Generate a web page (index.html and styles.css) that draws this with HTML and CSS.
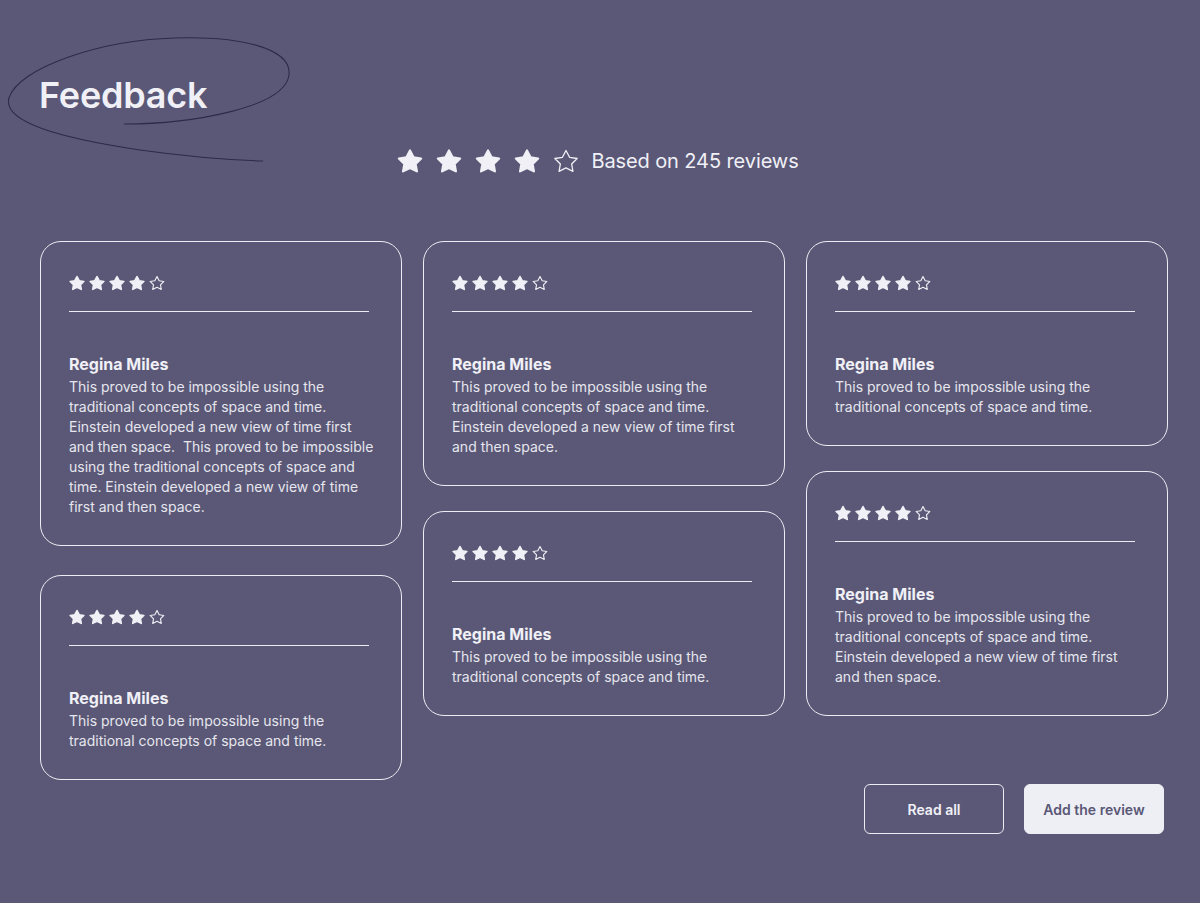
FILE: index.html
```html
<!DOCTYPE html>
<html lang="en">
<head>
<meta charset="utf-8">
<title>Feedback</title>
<link rel="stylesheet" href="styles.css">
</head>
<body>
<svg width="0" height="0" class="defs" aria-hidden="true">
  <defs>
    <path id="star" d="M12 2.3 L15.3 8.6 L22.3 9.7 L17.2 14.7 L18.4 21.6 L12 18.4 L5.6 21.6 L6.8 14.7 L1.7 9.7 L8.7 8.6 Z"/>
  </defs>
</svg>
<main class="page">
  <header class="header">
    <svg class="scribble" viewBox="0 0 300 140" width="300" height="140" aria-hidden="true">
      <path d="M124 94 C 190 94, 285 78, 289 45 C 292 18, 240 6, 175 8 C 100 10, 18 38, 9 68 C 2 92, 60 108, 140 120 C 190 127, 230 130, 263 131" fill="none" stroke="#2d2b47" stroke-width="1.1"/>
    </svg>
    <h1 class="title">Feedback</h1>
  </header>

  <div class="summary">
    <div class="stars stars--big">
      <svg class="star star--full" viewBox="0 0 24 24"><use href="#star"/></svg>
      <svg class="star star--full" viewBox="0 0 24 24"><use href="#star"/></svg>
      <svg class="star star--full" viewBox="0 0 24 24"><use href="#star"/></svg>
      <svg class="star star--full" viewBox="0 0 24 24"><use href="#star"/></svg>
      <svg class="star star--empty" viewBox="0 0 24 24"><use href="#star"/></svg>
    </div>
    <span class="summary__text">Based on 245 reviews</span>
  </div>

  <section class="grid">
    <div class="col col--wide-gap">
      <article class="card">
        <div class="stars">
          <svg class="star star--full" viewBox="0 0 24 24"><use href="#star"/></svg>
          <svg class="star star--full" viewBox="0 0 24 24"><use href="#star"/></svg>
          <svg class="star star--full" viewBox="0 0 24 24"><use href="#star"/></svg>
          <svg class="star star--full" viewBox="0 0 24 24"><use href="#star"/></svg>
          <svg class="star star--empty" viewBox="0 0 24 24"><use href="#star"/></svg>
        </div>
        <hr class="divider">
        <h3 class="name">Regina Miles</h3>
        <p class="text">This proved to be impossible using the traditional concepts of space and time. Einstein developed a new view of time first and then space.&nbsp; This proved to be impossible using the traditional concepts of space and time. Einstein developed a new view of time first and then space.</p>
      </article>
      <article class="card">
        <div class="stars">
          <svg class="star star--full" viewBox="0 0 24 24"><use href="#star"/></svg>
          <svg class="star star--full" viewBox="0 0 24 24"><use href="#star"/></svg>
          <svg class="star star--full" viewBox="0 0 24 24"><use href="#star"/></svg>
          <svg class="star star--full" viewBox="0 0 24 24"><use href="#star"/></svg>
          <svg class="star star--empty" viewBox="0 0 24 24"><use href="#star"/></svg>
        </div>
        <hr class="divider">
        <h3 class="name">Regina Miles</h3>
        <p class="text">This proved to be impossible using the traditional concepts of space and time.</p>
      </article>
    </div>
    <div class="col">
      <article class="card">
        <div class="stars">
          <svg class="star star--full" viewBox="0 0 24 24"><use href="#star"/></svg>
          <svg class="star star--full" viewBox="0 0 24 24"><use href="#star"/></svg>
          <svg class="star star--full" viewBox="0 0 24 24"><use href="#star"/></svg>
          <svg class="star star--full" viewBox="0 0 24 24"><use href="#star"/></svg>
          <svg class="star star--empty" viewBox="0 0 24 24"><use href="#star"/></svg>
        </div>
        <hr class="divider">
        <h3 class="name">Regina Miles</h3>
        <p class="text">This proved to be impossible using the traditional concepts of space and time. Einstein developed a new view of time first and then space.</p>
      </article>
      <article class="card">
        <div class="stars">
          <svg class="star star--full" viewBox="0 0 24 24"><use href="#star"/></svg>
          <svg class="star star--full" viewBox="0 0 24 24"><use href="#star"/></svg>
          <svg class="star star--full" viewBox="0 0 24 24"><use href="#star"/></svg>
          <svg class="star star--full" viewBox="0 0 24 24"><use href="#star"/></svg>
          <svg class="star star--empty" viewBox="0 0 24 24"><use href="#star"/></svg>
        </div>
        <hr class="divider">
        <h3 class="name">Regina Miles</h3>
        <p class="text">This proved to be impossible using the traditional concepts of space and time.</p>
      </article>
    </div>
    <div class="col">
      <article class="card">
        <div class="stars">
          <svg class="star star--full" viewBox="0 0 24 24"><use href="#star"/></svg>
          <svg class="star star--full" viewBox="0 0 24 24"><use href="#star"/></svg>
          <svg class="star star--full" viewBox="0 0 24 24"><use href="#star"/></svg>
          <svg class="star star--full" viewBox="0 0 24 24"><use href="#star"/></svg>
          <svg class="star star--empty" viewBox="0 0 24 24"><use href="#star"/></svg>
        </div>
        <hr class="divider">
        <h3 class="name">Regina Miles</h3>
        <p class="text">This proved to be impossible using the traditional concepts of space and time.</p>
      </article>
      <article class="card">
        <div class="stars">
          <svg class="star star--full" viewBox="0 0 24 24"><use href="#star"/></svg>
          <svg class="star star--full" viewBox="0 0 24 24"><use href="#star"/></svg>
          <svg class="star star--full" viewBox="0 0 24 24"><use href="#star"/></svg>
          <svg class="star star--full" viewBox="0 0 24 24"><use href="#star"/></svg>
          <svg class="star star--empty" viewBox="0 0 24 24"><use href="#star"/></svg>
        </div>
        <hr class="divider">
        <h3 class="name">Regina Miles</h3>
        <p class="text">This proved to be impossible using the traditional concepts of space and time. Einstein developed a new view of time first and then space.</p>
      </article>
    </div>
  </section>

  <div class="actions">
    <button class="btn btn--outline" type="button">Read all</button>
    <button class="btn btn--solid" type="button">Add the review</button>
  </div>
</main>
</body>
</html>
```
FILE: styles.css
```css
* { box-sizing: border-box; }

html, body {
  margin: 0;
  padding: 0;
  background: #5a5876;
  height: 100%;
}

body {
  font-family: Inter, "Noto Sans", "Liberation Sans", sans-serif;
  color: #f0f0f6;
}

.defs { position: absolute; width: 0; height: 0; overflow: hidden; }

.page {
  padding: 0 36px 0 40px;
}

.header {
  position: relative;
  padding-top: 73px;
}

.scribble {
  position: absolute;
  left: -40px;
  top: 30px;
  pointer-events: none;
}

.title {
  position: relative;
  margin: 0 0 0 -1px;
  font-size: 36px;
  line-height: 44px;
  font-weight: 600;
  letter-spacing: -0.2px;
  color: #f0f0f6;
}

.summary {
  margin-top: 31px;
  display: flex;
  align-items: center;
  justify-content: center;
  gap: 12px;
  padding-right: 8px;
}

.summary__text {
  font-size: 20px;
  line-height: 26px;
  letter-spacing: -0.1px;
  color: #f0f0f6;
}

.stars {
  display: flex;
  gap: 4px;
}

.stars--big {
  gap: 13px;
}

.star {
  width: 16px;
  height: 16px;
  display: block;
  stroke: #f0f0f6;
  stroke-linejoin: round;
  stroke-width: 2.4;
  overflow: visible;
}

.stars--big .star {
  width: 26px;
  height: 26px;
  stroke-width: 2;
}

.star--full { fill: #f0f0f6; }
.star--empty { fill: none; stroke-width: 1.7; }
.stars--big .star--empty { stroke-width: 1.2; }

.grid {
  margin-top: 67px;
  display: grid;
  grid-template-columns: repeat(3, 362px);
  column-gap: 21px;
  align-items: start;
}

.col {
  display: flex;
  flex-direction: column;
  gap: 25px;
}

.col--wide-gap { gap: 29px; }

.card {
  border: 1px solid #ececf3;
  border-radius: 21px;
  padding: 33px 25px 28px 28px;
}

.divider {
  width: 300px;
  margin: 20px 0 0 0;
  border: 0;
  border-top: 1px solid #ececf3;
  height: 0;
}

.name {
  margin: 42px 0 3px 0;
  font-size: 16px;
  line-height: 20px;
  font-weight: 700;
  color: #f0f0f6;
}

.text {
  margin: 0;
  font-size: 14px;
  line-height: 20px;
  color: #e6e6ee;
}

.actions {
  margin-top: 4px;
  display: flex;
  justify-content: flex-end;
  gap: 20px;
}

.btn {
  width: 140px;
  height: 50px;
  border-radius: 6px;
  font-family: inherit;
  font-size: 14px;
  font-weight: 600;
  cursor: pointer;
}

.btn--outline {
  background: transparent;
  border: 1px solid #ececf3;
  color: #f0f0f6;
}

.btn--solid {
  background: #eeeff5;
  border: 1px solid #eeeff5;
  color: #5a5876;
}
```
